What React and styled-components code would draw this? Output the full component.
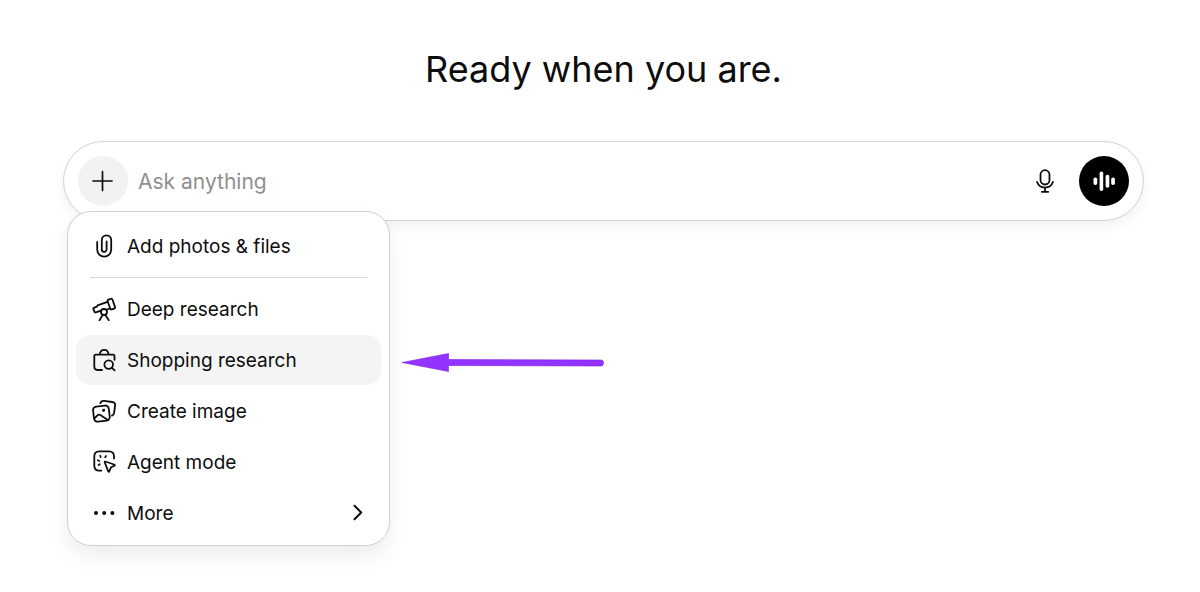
import React from "react";
import styled, { createGlobalStyle } from "styled-components";

const GlobalStyle = createGlobalStyle`
  *, *::before, *::after { box-sizing: border-box; }
  body {
    margin: 0;
    background: #fff;
    color: #0d0d0d;
    font-family: Inter, "Liberation Sans", sans-serif;
  }
  button, input { font: inherit; color: inherit; }
`;

const Page = styled.main`
  min-height: 100vh;
  padding: 45px 56px 44px 63px;
`;

const Title = styled.h1`
  margin: 0 0 48px;
  font-size: 36px;
  line-height: 48px;
  font-weight: 400;
  text-align: center;
`;

const Composer = styled.form`
  display: flex;
  align-items: center;
  height: 80px;
  padding: 0 14px;
  border: 1px solid #d2d2d2;
  border-radius: 40px;
  background: #fff;
  box-shadow: 0 6px 12px rgba(0, 0, 0, 0.05);
`;

const RoundButton = styled.button`
  display: flex;
  flex: none;
  align-items: center;
  justify-content: center;
  width: 50px;
  height: 50px;
  padding: 0;
  border: 0;
  border-radius: 50%;
  background: ${(p) => p.$fill || "transparent"};
  color: ${(p) => p.$ink || "#0d0d0d"};
  cursor: pointer;
`;

const Prompt = styled.input`
  flex: 1;
  min-width: 0;
  height: 50px;
  padding: 0 10px;
  border: 0;
  outline: 0;
  background: transparent;
  font-size: 21px;
  &::placeholder { color: #8f8f8f; opacity: 1; }
`;

const Actions = styled.div`
  display: flex;
  gap: 9px;
`;

const Menu = styled.div`
  position: relative;
  display: flex;
  flex-direction: column;
  gap: 1px;
  width: 323px;
  margin: -10px 0 0 4px;
  padding: 9px 8px 7px;
  border: 1px solid #cfcfcf;
  border-radius: 24px;
  background: #fff;
  box-shadow: 0 10px 20px rgba(0, 0, 0, 0.07);
`;

const MenuItem = styled.button`
  position: relative;
  display: flex;
  align-items: center;
  gap: 11px;
  height: 50px;
  padding: 0 12px 0 16px;
  border: 0;
  border-radius: 15px;
  background: ${(p) => (p.$active ? "#f4f4f4" : "transparent")};
  font-size: 19px;
  line-height: 24px;
  text-align: left;
  white-space: nowrap;
  cursor: pointer;
`;

const Label = styled.span`
  flex: 1;
  padding-top: 2px;
`;

const Divider = styled.hr`
  width: 277px;
  height: 1px;
  margin: 5px auto;
  border: 0;
  background: #d9d9d9;
`;

const Pointer = styled.svg`
  position: absolute;
  top: 17px;
  left: calc(100% + 20px);
`;

const Icon = ({ size = 24, weight = 1.8, children }) => (
  <svg
    width={size}
    height={size}
    viewBox="0 0 24 24"
    fill="none"
    stroke="currentColor"
    strokeWidth={weight}
    strokeLinecap="round"
    strokeLinejoin="round"
    aria-hidden="true"
  >
    {children}
  </svg>
);

const PlusIcon = () => (
  <Icon weight={1.7}>
    <path d="M11.5 2.5v19M2 12h19" />
  </Icon>
);

const MicIcon = () => (
  <Icon weight={1.8}>
    <rect x="7.5" y="1.2" width="9" height="14.3" rx="4.5" />
    <path d="M4 12.8c1.2 3.6 4.3 5.8 8 5.8s6.8-2.2 8-5.8M12 18.7v4M8.8 22.8h6.4" />
  </Icon>
);

const VoiceIcon = () => (
  <Icon>
    <g fill="currentColor" stroke="none">
      <rect x="1.5" y="8.5" width="3.7" height="7.5" rx="1.8" />
      <rect x="7.6" y="2.5" width="3.6" height="19.5" rx="1.8" />
      <rect x="13.6" y="5.8" width="3.7" height="13" rx="1.8" />
      <rect x="19.2" y="8.5" width="3.7" height="7.5" rx="1.8" />
    </g>
  </Icon>
);

const ClipIcon = () => (
  <Icon>
    <path d="M5.2 8v7.6a7 7 0 0 0 14 0V6a4.7 4.7 0 0 0-9.4 0v9.4a2.4 2.4 0 0 0 4.8 0V7.5" />
  </Icon>
);

const TelescopeIcon = () => (
  <Icon>
    <path d="m16.4 2.6 2.4-.8c.8-.3 1.4.1 1.7.9l2.5 7.2c.3.8 0 1.5-.8 1.7l-2.3.8c-.8.2-1.4-.1-1.7-.9l-2.6-7.2c-.2-.8 0-1.4.8-1.7Z" />
    <path d="M15.6 4.8 6.2 8.2c-.8.3-1.1.8-1.3 1.5l-2.7 1c-.7.3-1 .8-.7 1.5l.9 2.4c.3.8.8 1 1.5.7l4.9-1.7M18 11.6l-3.4.9" />
    <circle cx="12" cy="15" r="3" />
    <path d="m10.7 18-3.2 5.2M13.4 18l3.4 5.2" />
  </Icon>
);

const BagSearchIcon = () => (
  <Icon>
    <path d="M7.8 6.7C8 3.7 9.8 1.9 12.2 1.9s4.2 1.8 4.4 4.8M22.5 11.8V8.2c0-1-.5-1.5-1.5-1.5H3.8c-1 0-1.5.5-1.5 1.5v10.6c0 2.2 1 3.2 3.2 3.2H10" />
    <circle cx="16.7" cy="16.6" r="4.3" />
    <path d="m19.9 19.8 2.8 2.5" />
  </Icon>
);

const ImagesIcon = () => (
  <Icon>
    <g transform="rotate(-7 9.3 14.5)">
      <rect x="1.5" y="7" width="15.8" height="15.2" rx="3.6" />
      <path d="m2 18.5 3.2-2.6c1-.8 2-.8 3 0L15 21.8" />
      <circle cx="12" cy="11.6" r="1" fill="currentColor" strokeWidth="1" />
    </g>
    <path d="M8.3 4.2c.6-1.8 1.9-2.5 3.7-2.3l8.2 1.1c2.1.3 3.2 1.6 2.9 3.7l-1 7.2c-.2 1.5-.9 2.3-2.1 2.7" />
  </Icon>
);

const AgentIcon = () => (
  <Icon>
    <path d="M22 8.6V6.3c0-3.3-1.7-5-5-5H7.3c-3.300 0-5 1.700-5 5v9.400c0 3.300 1.700 5 5 5h2" />
    <path d="m13.3 11.5 8.8 3c1 .3 1 1 .1 1.4L19 17.3l-1.600 3.900c-.4.900-1 .9-1.300-.1l-3.400-8.900c-.2-.6.100-.9.600-.7Z" />
    <path d="m8.3 5.7.3 1.5M14 6l-.8 1.3M5.900 10.200l1.500.7M7.800 14.200l-1.200.8" strokeWidth="1.7" />
  </Icon>
);

const DotsIcon = () => (
  <Icon>
    <g fill="currentColor" stroke="none">
      <circle cx="4" cy="12" r="2" />
      <circle cx="12.2" cy="12" r="2" />
      <circle cx="20.4" cy="12" r="2" />
    </g>
  </Icon>
);

const ChevronIcon = () => (
  <Icon weight={2}>
    <path d="m9.5 4.7 6.7 6.8-6.7 6.8" />
  </Icon>
);

const tools = [
  { label: "Deep research", Glyph: TelescopeIcon },
  { label: "Shopping research", Glyph: BagSearchIcon, active: true },
  { label: "Create image", Glyph: ImagesIcon },
  { label: "Agent mode", Glyph: AgentIcon },
  { label: "More", Glyph: DotsIcon, submenu: true },
];

export default function App() {
  return (
    <Page>
      <GlobalStyle />
      <Title>Ready when you are.</Title>
      <Composer onSubmit={(e) => e.preventDefault()}>
        <RoundButton type="button" $fill="#f2f2f2" aria-label="Add" aria-expanded="true">
          <PlusIcon />
        </RoundButton>
        <Prompt type="text" placeholder="Ask anything" aria-label="Ask anything" />
        <Actions>
          <RoundButton type="button" aria-label="Dictate">
            <MicIcon />
          </RoundButton>
          <RoundButton type="button" $fill="#000" $ink="#fff" aria-label="Voice mode">
            <VoiceIcon />
          </RoundButton>
        </Actions>
      </Composer>
      <Menu role="menu">
        <MenuItem type="button" role="menuitem">
          <ClipIcon />
          <Label>Add photos &amp; files</Label>
        </MenuItem>
        <Divider />
        {tools.map(({ label, Glyph, active, submenu }) => (
          <MenuItem key={label} type="button" role="menuitem" $active={active}>
            <Glyph />
            <Label>{label}</Label>
            {submenu && <ChevronIcon />}
            {active && (
              <Pointer width="204" height="22" viewBox="0 0 204 22" aria-hidden="true">
                <path
                  d="M1 10.5 47.5 1.5V7.5L200 8q2.5 0 2.5 3t-2.5 3L47.5 13.5V19.5Z"
                  fill="#9333ff"
                  stroke="#7d1fe0"
                  strokeWidth="0.6"
                />
              </Pointer>
            )}
          </MenuItem>
        ))}
      </Menu>
    </Page>
  );
}
